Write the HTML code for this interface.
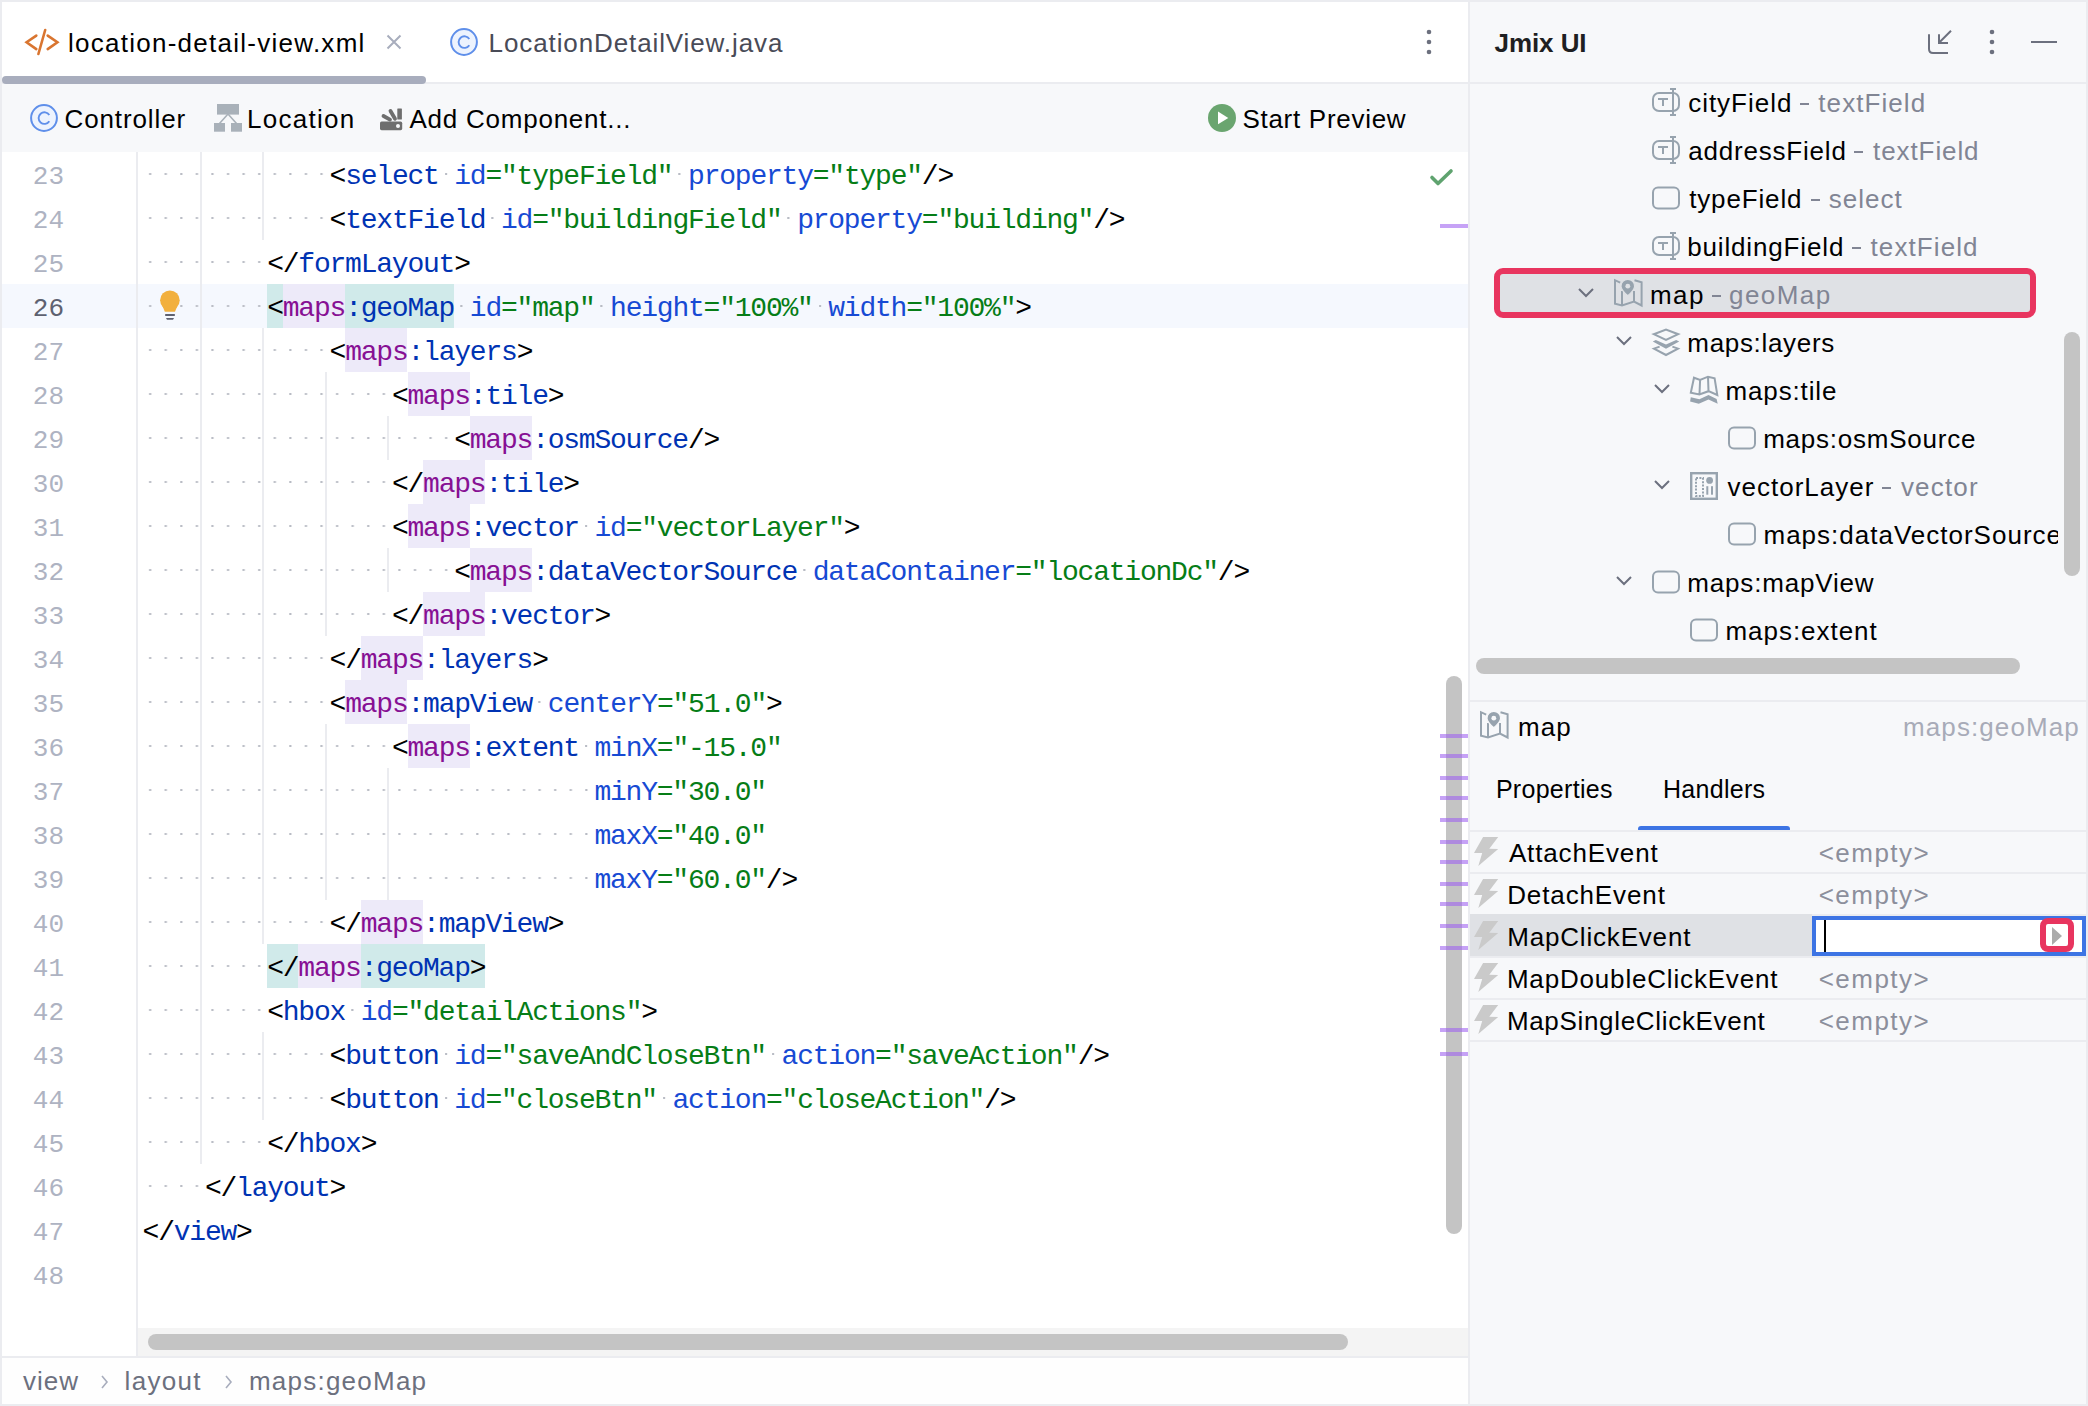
<!DOCTYPE html><html><head><meta charset="utf-8"><style>
*{box-sizing:border-box;margin:0;padding:0}
html,body{width:2088px;height:1406px;overflow:hidden}
body{position:relative;background:#EBECF0;font-family:"Liberation Sans",sans-serif;font-size:26px;color:#000}
.a{position:absolute}
.ui{position:absolute;font-family:"Liberation Sans",sans-serif;font-size:26px;white-space:pre;line-height:30px}
.code{position:absolute;font-family:"Liberation Mono",monospace;font-size:28px;letter-spacing:-1.22px;white-space:pre;line-height:44px;height:44px}
.ln{position:absolute;font-family:"Liberation Mono",monospace;font-size:26px;line-height:44px;color:#AEB3C2;text-align:right;width:80px;left:-16px}
.dots{position:absolute;height:44px;background-image:radial-gradient(circle at 7.2px 22px,#B0B3BC 0,#BFC2CA 0.9px,rgba(255,255,255,0) 1.5px);background-size:15.58px 44px;background-repeat:repeat-x}
.g{position:absolute;width:2px;background:#EBECF0}
.t{color:#0033B3}.p{color:#871094}.at{color:#174AD4}.v{color:#067D17}.k{color:#000}
.gray{color:#818594}
svg{position:absolute;overflow:visible}
</style></head><body>
<div class="a" style="left:2px;top:2px;width:1466px;height:80px;background:#FFFFFF"></div>
<div class="a" style="left:2px;top:82px;width:1466px;height:2px;background:#EBECF0"></div>
<div class="a" style="left:2px;top:76px;width:424px;height:8px;border-radius:4px;background:#A8ADBD"></div>
<div class="a" style="left:2px;top:84px;width:1466px;height:68px;background:#F7F8FA"></div>
<div class="a" style="left:2px;top:152px;width:1466px;height:1204px;background:#FFFFFF"></div>
<div class="a" style="left:2px;top:284px;width:1466px;height:44px;background:#F5F8FE"></div>
<div class="g" style="left:136px;top:152px;height:1204px"></div>
<div class="a" style="left:138px;top:1328px;width:1330px;height:28px;background:#F4F4F4"></div>
<div class="a" style="left:148px;top:1334px;width:1200px;height:16px;border-radius:8px;background:#C4C4C4"></div>
<div class="a" style="left:2px;top:1356px;width:1466px;height:2px;background:#EBECF0"></div>
<div class="a" style="left:2px;top:1358px;width:1466px;height:46px;background:#FEFEFE"></div>
<div class="a" style="left:1446px;top:676px;width:16px;height:558px;border-radius:8px;background:#C4C4C4"></div>
<div class="a" style="left:360.7px;top:944px;width:124.6px;height:44px;background:#D0EAEA"></div><div class="a" style="left:267.2px;top:944px;width:31.2px;height:44px;background:#D0EAEA"></div><div class="a" style="left:345.1px;top:284px;width:109.1px;height:44px;background:#D0EAEA"></div><div class="a" style="left:267.2px;top:284px;width:15.6px;height:44px;background:#D0EAEA"></div><div class="a" style="left:282.8px;top:284px;width:62.3px;height:44px;background:#EDEAF9"></div><div class="a" style="left:345.1px;top:328px;width:62.3px;height:44px;background:#EDEAF9"></div><div class="a" style="left:407.5px;top:372px;width:62.3px;height:44px;background:#EDEAF9"></div><div class="a" style="left:469.8px;top:416px;width:62.3px;height:44px;background:#EDEAF9"></div><div class="a" style="left:423.0px;top:460px;width:62.3px;height:44px;background:#EDEAF9"></div><div class="a" style="left:407.5px;top:504px;width:62.3px;height:44px;background:#EDEAF9"></div><div class="a" style="left:469.8px;top:548px;width:62.3px;height:44px;background:#EDEAF9"></div><div class="a" style="left:423.0px;top:592px;width:62.3px;height:44px;background:#EDEAF9"></div><div class="a" style="left:360.7px;top:636px;width:62.3px;height:44px;background:#EDEAF9"></div><div class="a" style="left:345.1px;top:680px;width:62.3px;height:44px;background:#EDEAF9"></div><div class="a" style="left:407.5px;top:724px;width:62.3px;height:44px;background:#EDEAF9"></div><div class="a" style="left:360.7px;top:900px;width:62.3px;height:44px;background:#EDEAF9"></div><div class="a" style="left:298.4px;top:944px;width:62.3px;height:44px;background:#EDEAF9"></div><div class="g" style="left:200px;top:152px;height:1012px"></div><div class="g" style="left:262px;top:152px;height:88px"></div><div class="g" style="left:262px;top:328px;height:616px"></div><div class="g" style="left:325px;top:372px;height:264px"></div><div class="g" style="left:387px;top:416px;height:44px"></div><div class="g" style="left:387px;top:548px;height:44px"></div><div class="g" style="left:325px;top:724px;height:176px"></div><div class="g" style="left:387px;top:768px;height:132px"></div><div class="g" style="left:262px;top:1032px;height:88px"></div>
<div class="dots" style="left:142.6px;top:152px;width:187.0px"></div><div class="dots" style="left:438.6px;top:152px;width:15.6px"></div><div class="dots" style="left:672.3px;top:152px;width:15.6px"></div><div class="dots" style="left:142.6px;top:196px;width:187.0px"></div><div class="dots" style="left:485.4px;top:196px;width:15.6px"></div><div class="dots" style="left:781.4px;top:196px;width:15.6px"></div><div class="dots" style="left:142.6px;top:240px;width:124.6px"></div><div class="dots" style="left:142.6px;top:284px;width:124.6px"></div><div class="dots" style="left:454.2px;top:284px;width:15.6px"></div><div class="dots" style="left:594.4px;top:284px;width:15.6px"></div><div class="dots" style="left:812.5px;top:284px;width:15.6px"></div><div class="dots" style="left:142.6px;top:328px;width:187.0px"></div><div class="dots" style="left:142.6px;top:372px;width:249.3px"></div><div class="dots" style="left:142.6px;top:416px;width:311.6px"></div><div class="dots" style="left:142.6px;top:460px;width:249.3px"></div><div class="dots" style="left:142.6px;top:504px;width:249.3px"></div><div class="dots" style="left:578.8px;top:504px;width:15.6px"></div><div class="dots" style="left:142.6px;top:548px;width:311.6px"></div><div class="dots" style="left:797.0px;top:548px;width:15.6px"></div><div class="dots" style="left:142.6px;top:592px;width:249.3px"></div><div class="dots" style="left:142.6px;top:636px;width:187.0px"></div><div class="dots" style="left:142.6px;top:680px;width:187.0px"></div><div class="dots" style="left:532.1px;top:680px;width:15.6px"></div><div class="dots" style="left:142.6px;top:724px;width:249.3px"></div><div class="dots" style="left:578.8px;top:724px;width:15.6px"></div><div class="dots" style="left:142.6px;top:768px;width:451.8px"></div><div class="dots" style="left:142.6px;top:812px;width:451.8px"></div><div class="dots" style="left:142.6px;top:856px;width:451.8px"></div><div class="dots" style="left:142.6px;top:900px;width:187.0px"></div><div class="dots" style="left:142.6px;top:944px;width:124.6px"></div><div class="dots" style="left:142.6px;top:988px;width:124.6px"></div><div class="dots" style="left:345.1px;top:988px;width:15.6px"></div><div class="dots" style="left:142.6px;top:1032px;width:187.0px"></div><div class="dots" style="left:438.6px;top:1032px;width:15.6px"></div><div class="dots" style="left:765.8px;top:1032px;width:15.6px"></div><div class="dots" style="left:142.6px;top:1076px;width:187.0px"></div><div class="dots" style="left:438.6px;top:1076px;width:15.6px"></div><div class="dots" style="left:656.7px;top:1076px;width:15.6px"></div><div class="dots" style="left:142.6px;top:1120px;width:124.6px"></div><div class="dots" style="left:142.6px;top:1164px;width:62.3px"></div>
<div class="ln" style="top:155px;color:#AEB3C2">23</div><div class="ln" style="top:199px;color:#AEB3C2">24</div><div class="ln" style="top:243px;color:#AEB3C2">25</div><div class="ln" style="top:287px;color:#5E6170">26</div><div class="ln" style="top:331px;color:#AEB3C2">27</div><div class="ln" style="top:375px;color:#AEB3C2">28</div><div class="ln" style="top:419px;color:#AEB3C2">29</div><div class="ln" style="top:463px;color:#AEB3C2">30</div><div class="ln" style="top:507px;color:#AEB3C2">31</div><div class="ln" style="top:551px;color:#AEB3C2">32</div><div class="ln" style="top:595px;color:#AEB3C2">33</div><div class="ln" style="top:639px;color:#AEB3C2">34</div><div class="ln" style="top:683px;color:#AEB3C2">35</div><div class="ln" style="top:727px;color:#AEB3C2">36</div><div class="ln" style="top:771px;color:#AEB3C2">37</div><div class="ln" style="top:815px;color:#AEB3C2">38</div><div class="ln" style="top:859px;color:#AEB3C2">39</div><div class="ln" style="top:903px;color:#AEB3C2">40</div><div class="ln" style="top:947px;color:#AEB3C2">41</div><div class="ln" style="top:991px;color:#AEB3C2">42</div><div class="ln" style="top:1035px;color:#AEB3C2">43</div><div class="ln" style="top:1079px;color:#AEB3C2">44</div><div class="ln" style="top:1123px;color:#AEB3C2">45</div><div class="ln" style="top:1167px;color:#AEB3C2">46</div><div class="ln" style="top:1211px;color:#AEB3C2">47</div><div class="ln" style="top:1255px;color:#AEB3C2">48</div>
<div class="code" style="left:329.6px;top:154.5px"><span class="k">&lt;</span><span class="t">select</span> <span class="at">id</span><span class="v">=&quot;typeField&quot;</span> <span class="at">property</span><span class="v">=&quot;type&quot;</span><span class="k">/&gt;</span></div><div class="code" style="left:329.6px;top:198.5px"><span class="k">&lt;</span><span class="t">textField</span> <span class="at">id</span><span class="v">=&quot;buildingField&quot;</span> <span class="at">property</span><span class="v">=&quot;building&quot;</span><span class="k">/&gt;</span></div><div class="code" style="left:267.2px;top:242.5px"><span class="k">&lt;/</span><span class="t">formLayout</span><span class="k">&gt;</span></div><div class="code" style="left:267.2px;top:286.5px"><span class="k">&lt;</span><span class="p">maps</span><span class="t">:geoMap</span> <span class="at">id</span><span class="v">=&quot;map&quot;</span> <span class="at">height</span><span class="v">=&quot;100%&quot;</span> <span class="at">width</span><span class="v">=&quot;100%&quot;</span><span class="k">&gt;</span></div><div class="code" style="left:329.6px;top:330.5px"><span class="k">&lt;</span><span class="p">maps</span><span class="t">:layers</span><span class="k">&gt;</span></div><div class="code" style="left:391.9px;top:374.5px"><span class="k">&lt;</span><span class="p">maps</span><span class="t">:tile</span><span class="k">&gt;</span></div><div class="code" style="left:454.2px;top:418.5px"><span class="k">&lt;</span><span class="p">maps</span><span class="t">:osmSource</span><span class="k">/&gt;</span></div><div class="code" style="left:391.9px;top:462.5px"><span class="k">&lt;/</span><span class="p">maps</span><span class="t">:tile</span><span class="k">&gt;</span></div><div class="code" style="left:391.9px;top:506.5px"><span class="k">&lt;</span><span class="p">maps</span><span class="t">:vector</span> <span class="at">id</span><span class="v">=&quot;vectorLayer&quot;</span><span class="k">&gt;</span></div><div class="code" style="left:454.2px;top:550.5px"><span class="k">&lt;</span><span class="p">maps</span><span class="t">:dataVectorSource</span> <span class="at">dataContainer</span><span class="v">=&quot;locationDc&quot;</span><span class="k">/&gt;</span></div><div class="code" style="left:391.9px;top:594.5px"><span class="k">&lt;/</span><span class="p">maps</span><span class="t">:vector</span><span class="k">&gt;</span></div><div class="code" style="left:329.6px;top:638.5px"><span class="k">&lt;/</span><span class="p">maps</span><span class="t">:layers</span><span class="k">&gt;</span></div><div class="code" style="left:329.6px;top:682.5px"><span class="k">&lt;</span><span class="p">maps</span><span class="t">:mapView</span> <span class="at">centerY</span><span class="v">=&quot;51.0&quot;</span><span class="k">&gt;</span></div><div class="code" style="left:391.9px;top:726.5px"><span class="k">&lt;</span><span class="p">maps</span><span class="t">:extent</span> <span class="at">minX</span><span class="v">=&quot;-15.0&quot;</span></div><div class="code" style="left:594.4px;top:770.5px"><span class="at">minY</span><span class="v">=&quot;30.0&quot;</span></div><div class="code" style="left:594.4px;top:814.5px"><span class="at">maxX</span><span class="v">=&quot;40.0&quot;</span></div><div class="code" style="left:594.4px;top:858.5px"><span class="at">maxY</span><span class="v">=&quot;60.0&quot;</span><span class="k">/&gt;</span></div><div class="code" style="left:329.6px;top:902.5px"><span class="k">&lt;/</span><span class="p">maps</span><span class="t">:mapView</span><span class="k">&gt;</span></div><div class="code" style="left:267.2px;top:946.5px"><span class="k">&lt;/</span><span class="p">maps</span><span class="t">:geoMap</span><span class="k">&gt;</span></div><div class="code" style="left:267.2px;top:990.5px"><span class="k">&lt;</span><span class="t">hbox</span> <span class="at">id</span><span class="v">=&quot;detailActions&quot;</span><span class="k">&gt;</span></div><div class="code" style="left:329.6px;top:1034.5px"><span class="k">&lt;</span><span class="t">button</span> <span class="at">id</span><span class="v">=&quot;saveAndCloseBtn&quot;</span> <span class="at">action</span><span class="v">=&quot;saveAction&quot;</span><span class="k">/&gt;</span></div><div class="code" style="left:329.6px;top:1078.5px"><span class="k">&lt;</span><span class="t">button</span> <span class="at">id</span><span class="v">=&quot;closeBtn&quot;</span> <span class="at">action</span><span class="v">=&quot;closeAction&quot;</span><span class="k">/&gt;</span></div><div class="code" style="left:267.2px;top:1122.5px"><span class="k">&lt;/</span><span class="t">hbox</span><span class="k">&gt;</span></div><div class="code" style="left:204.9px;top:1166.5px"><span class="k">&lt;/</span><span class="t">layout</span><span class="k">&gt;</span></div><div class="code" style="left:142.6px;top:1210.5px"><span class="k">&lt;/</span><span class="t">view</span><span class="k">&gt;</span></div>
<svg style="left:158px;top:290px" width="24" height="32" viewBox="0 0 24 32">
<circle cx="11.9" cy="10.3" r="9.8" fill="#F2B03E"/><path d="M4.5 16 L19.3 16 L17 21.8 L6.8 21.8 Z" fill="#F2B03E"/>
<rect x="7" y="24" width="10" height="2" rx="0.8" fill="#5E6170"/><path d="M8 28 L16 28 L15 29.8 L9 29.8 Z" fill="#5E6170"/></svg>
<svg style="left:1428px;top:168px" width="28" height="22" viewBox="0 0 28 22"><path d="M4 9.5 L10 15.5 L23 3" fill="none" stroke="#5FA36F" stroke-width="3.6" stroke-linecap="round" stroke-linejoin="round"/></svg>
<div class="a" style="left:1440px;top:224px;width:28px;height:4px;background:rgba(160,100,240,0.6)"></div>
<div class="a" style="left:1440px;top:734px;width:28px;height:4px;background:rgba(160,100,240,0.6)"></div>
<div class="a" style="left:1440px;top:754px;width:28px;height:4px;background:rgba(160,100,240,0.6)"></div>
<div class="a" style="left:1440px;top:776px;width:28px;height:4px;background:rgba(160,100,240,0.6)"></div>
<div class="a" style="left:1440px;top:796px;width:28px;height:4px;background:rgba(160,100,240,0.6)"></div>
<div class="a" style="left:1440px;top:818px;width:28px;height:4px;background:rgba(160,100,240,0.6)"></div>
<div class="a" style="left:1440px;top:840px;width:28px;height:4px;background:rgba(160,100,240,0.6)"></div>
<div class="a" style="left:1440px;top:860px;width:28px;height:4px;background:rgba(160,100,240,0.6)"></div>
<div class="a" style="left:1440px;top:882px;width:28px;height:4px;background:rgba(160,100,240,0.6)"></div>
<div class="a" style="left:1440px;top:902px;width:28px;height:4px;background:rgba(160,100,240,0.6)"></div>
<div class="a" style="left:1440px;top:924px;width:28px;height:4px;background:rgba(160,100,240,0.6)"></div>
<div class="a" style="left:1440px;top:946px;width:28px;height:4px;background:rgba(160,100,240,0.6)"></div>
<div class="a" style="left:1440px;top:1028px;width:28px;height:4px;background:rgba(160,100,240,0.6)"></div>
<div class="a" style="left:1440px;top:1052px;width:28px;height:4px;background:rgba(160,100,240,0.6)"></div>
<div class="a" style="left:1468px;top:0px;width:2px;height:1406px;background:#EBECF0"></div>
<svg style="left:24px;top:27px" width="36" height="30" viewBox="0 0 36 30">
<path d="M12.3 8.6 L2.6 15.3 L12.3 22.1 M23.7 8.6 L33.4 15.3 L23.7 22.1" fill="none" stroke="#D97530" stroke-width="2.6" stroke-linecap="round" stroke-linejoin="miter"/>
<path d="M21.2 3 L14.4 27" fill="none" stroke="#D97530" stroke-width="2.6" stroke-linecap="round"/></svg>
<svg style="left:386px;top:34px" width="16" height="16" viewBox="0 0 16 16"><path d="M1.5 1.5 L14.5 14.5 M14.5 1.5 L1.5 14.5" stroke="#A8ADBD" stroke-width="2"/></svg>
<svg style="left:450px;top:28px" width="28" height="28" viewBox="0 0 28 28"><circle cx="14" cy="14" r="12.9" fill="#EDF3FE" stroke="#5F8FEA" stroke-width="2"/><path d="M19.3 11 A5.8 5.8 0 1 0 19.3 17.2" fill="none" stroke="#5F8FEA" stroke-width="1.9"/></svg>
<svg style="left:1424px;top:28px" width="10" height="30" viewBox="0 0 10 30"><circle cx="5" cy="4" r="2.3" fill="#6C707E"/><circle cx="5" cy="14" r="2.3" fill="#6C707E"/><circle cx="5" cy="24" r="2.3" fill="#6C707E"/></svg>
<svg style="left:30px;top:104px" width="28" height="28" viewBox="0 0 28 28"><circle cx="14" cy="14" r="12.9" fill="#EDF3FE" stroke="#5F8FEA" stroke-width="2"/><path d="M19.3 11 A5.8 5.8 0 1 0 19.3 17.2" fill="none" stroke="#5F8FEA" stroke-width="1.9"/></svg>
<svg style="left:214px;top:104px" width="28" height="28" viewBox="0 0 28 28">
<rect x="3" y="0" width="22" height="10.6" fill="#A9B1B9"/><rect x="0" y="19" width="11" height="8.7" fill="#A9B1B9"/><rect x="17" y="19" width="11" height="8.7" fill="#A9B1B9"/>
<path d="M14 10 L5.5 19.5 M14 10 L22.5 19.5" stroke="#A9B1B9" stroke-width="1.6"/></svg>
<svg style="left:380px;top:108px" width="23" height="23" viewBox="0 0 23 23">
<rect x="0" y="13.6" width="22.2" height="8.6" rx="1.6" fill="#6E6E6E"/><circle cx="18" cy="18" r="2" fill="#F7F8FA"/>
<path d="M3.5 8 L10 11.6" stroke="#6E6E6E" stroke-width="3.8" stroke-linecap="round"/>
<path d="M10.5 3 L15 10.8" stroke="#6E6E6E" stroke-width="3.8" stroke-linecap="round"/>
<rect x="17.3" y="0.4" width="4.6" height="11" rx="0.5" fill="#6E6E6E"/></svg>
<svg style="left:1208px;top:104px" width="28" height="28" viewBox="0 0 28 28"><circle cx="14" cy="14" r="14" fill="#6AA56F"/><path d="M10 7.6 L20.3 14 L10 20.3 Z" fill="#FFFFFF"/></svg>
<svg style="left:100px;top:1374px" width="10" height="16" viewBox="0 0 10 16"><path d="M2 2 L7 8 L2 14" fill="none" stroke="#A8ADBD" stroke-width="1.6"/></svg>
<svg style="left:224px;top:1374px" width="10" height="16" viewBox="0 0 10 16"><path d="M2 2 L7 8 L2 14" fill="none" stroke="#A8ADBD" stroke-width="1.6"/></svg>
<div class="a" style="left:1470px;top:2px;width:616px;height:1402px;background:#F7F8FA"></div>
<div class="a" style="left:1470px;top:82px;width:616px;height:2px;background:#EBECF0"></div>
<svg style="left:1926px;top:28px" width="28" height="28" viewBox="0 0 28 28"><path d="M3 6.2 L3 21 Q3 25 7 25 L22 25" fill="none" stroke="#6C707E" stroke-width="2"/><path d="M25 2.7 L13.5 14.2 M13 6.2 L13 15 L22 15" fill="none" stroke="#6C707E" stroke-width="2"/></svg>
<svg style="left:1987px;top:28px" width="10" height="30" viewBox="0 0 10 30"><circle cx="5" cy="4" r="2.3" fill="#6C707E"/><circle cx="5" cy="14" r="2.3" fill="#6C707E"/><circle cx="5" cy="24" r="2.3" fill="#6C707E"/></svg>
<div class="a" style="left:2031px;top:41px;width:26px;height:2px;background:#6C707E"></div>
<div class="a" style="left:1494px;top:268px;width:542px;height:50px;border:6px solid #E8355F;border-radius:9px;background:#DFE1E5"></div>
<div class="a" style="left:1470px;top:84px;width:594px;height:568px;overflow:hidden">
<svg style="left:182px;top:4px" width="28" height="28" viewBox="0 0 28 28"><rect x="1" y="5" width="26" height="18" rx="6" fill="none" stroke="#97A3AE" stroke-width="2"/><path d="M21 1 L21 27 M18 1 L24 1 M18 27 L24 27 M6 10.9 L16 10.9 M11 11 L11 18" stroke="#97A3AE" stroke-width="2" fill="none"/></svg>
<svg style="left:182px;top:52px" width="28" height="28" viewBox="0 0 28 28"><rect x="1" y="5" width="26" height="18" rx="6" fill="none" stroke="#97A3AE" stroke-width="2"/><path d="M21 1 L21 27 M18 1 L24 1 M18 27 L24 27 M6 10.9 L16 10.9 M11 11 L11 18" stroke="#97A3AE" stroke-width="2" fill="none"/></svg>
<svg style="left:182px;top:100px" width="28" height="28" viewBox="0 0 28 28"><rect x="1" y="3.5" width="26" height="21" rx="5" fill="none" stroke="#97A3AE" stroke-width="2"/></svg>
<svg style="left:182px;top:148px" width="28" height="28" viewBox="0 0 28 28"><rect x="1" y="5" width="26" height="18" rx="6" fill="none" stroke="#97A3AE" stroke-width="2"/><path d="M21 1 L21 27 M18 1 L24 1 M18 27 L24 27 M6 10.9 L16 10.9 M11 11 L11 18" stroke="#97A3AE" stroke-width="2" fill="none"/></svg>
<svg style="left:108px;top:202px" width="16" height="12" viewBox="0 0 16 12"><path d="M1 3 L8 10 L15 3" fill="none" stroke="#6C707E" stroke-width="2"/></svg>
<svg style="left:144px;top:194px" width="30" height="30" viewBox="0 0 30 30"><path d="M6.2 4.6 L1 2.2 L1 25.6 L8 27.4 L20 23.6 L27.6 27.5 L27.6 4.3 L20.5 2.3" fill="none" stroke="#97A3AE" stroke-width="2" stroke-linejoin="miter"/><path d="M8 13 L8 27 M20 13 L20 23.6" fill="none" stroke="#97A3AE" stroke-width="2"/><path d="M13.8 1.4 C9.8 1.4 7 4.4 7 8.2 C7 11 9.5 14 13.8 17.8 C18.1 14 20.6 11 20.6 8.2 C20.6 4.4 17.8 1.4 13.8 1.4 Z" fill="#97A3AE" stroke="#DFE1E5" stroke-width="1.2"/><circle cx="13.8" cy="8.2" r="2.4" fill="#DFE1E5"/></svg>
<svg style="left:146px;top:250px" width="16" height="12" viewBox="0 0 16 12"><path d="M1 3 L8 10 L15 3" fill="none" stroke="#6C707E" stroke-width="2"/></svg>
<svg style="left:182px;top:244px" width="28" height="28" viewBox="0 0 28 28"><path d="M1.8 6.2 L14 1.6 L26.2 6.2 L14 11.8 Z" fill="none" stroke="#97A3AE" stroke-width="2" stroke-linejoin="miter"/><path d="M0.8 13.4 L3.8 12 L14 16.6 L24.2 12 L27.2 13.4 L14 20.8 Z" fill="#97A3AE"/><path d="M7.6 18.6 L2 20.6 L14 27 L26 20.6 L20.4 18.6" fill="none" stroke="#97A3AE" stroke-width="2" stroke-linejoin="miter"/></svg>
<svg style="left:184px;top:298px" width="16" height="12" viewBox="0 0 16 12"><path d="M1 3 L8 10 L15 3" fill="none" stroke="#6C707E" stroke-width="2"/></svg>
<svg style="left:220px;top:292px" width="30" height="30" viewBox="0 0 30 30"><path d="M4 1.7 L10.1 4 L18 0.7 L24.6 2.4 L27.3 19 L18.5 15.2 L9.4 18.5 L0.8 16.8 Z M10.1 4 L9.5 18.3 M18 0.7 L18.5 15.2" fill="none" stroke="#97A3AE" stroke-width="2" stroke-linejoin="miter"/><path d="M0.8 21.3 L9.4 23.3 L18.5 19 L26.6 23 L27.7 27.7 L18.5 23.6 L8.8 27.7 L0.1 25.6 Z" fill="#97A3AE"/></svg>
<svg style="left:258px;top:340px" width="28" height="28" viewBox="0 0 28 28"><rect x="1" y="3.5" width="26" height="21" rx="5" fill="none" stroke="#97A3AE" stroke-width="2"/></svg>
<svg style="left:184px;top:394px" width="16" height="12" viewBox="0 0 16 12"><path d="M1 3 L8 10 L15 3" fill="none" stroke="#6C707E" stroke-width="2"/></svg>
<svg style="left:220px;top:388px" width="28" height="28" viewBox="0 0 28 28"><rect x="1.2" y="1.2" width="25.6" height="25.6" fill="none" stroke="#97A3AE" stroke-width="2.4"/><rect x="6" y="6" width="7" height="18" fill="none" stroke="#97A3AE" stroke-width="2" stroke-dasharray="2 1.4"/><circle cx="19.6" cy="8.4" r="3.4" fill="#97A3AE"/><rect x="16.3" y="14.2" width="2" height="8.5" fill="#97A3AE"/><rect x="21" y="14.2" width="2" height="8.5" fill="#97A3AE"/></svg>
<svg style="left:258px;top:436px" width="28" height="28" viewBox="0 0 28 28"><rect x="1" y="3.5" width="26" height="21" rx="5" fill="none" stroke="#97A3AE" stroke-width="2"/></svg>
<svg style="left:146px;top:490px" width="16" height="12" viewBox="0 0 16 12"><path d="M1 3 L8 10 L15 3" fill="none" stroke="#6C707E" stroke-width="2"/></svg>
<svg style="left:182px;top:484px" width="28" height="28" viewBox="0 0 28 28"><rect x="1" y="3.5" width="26" height="21" rx="5" fill="none" stroke="#97A3AE" stroke-width="2"/></svg>
<svg style="left:220px;top:532px" width="28" height="28" viewBox="0 0 28 28"><rect x="1" y="3.5" width="26" height="21" rx="5" fill="none" stroke="#97A3AE" stroke-width="2"/></svg>
</div>
<div class="a" style="left:2064px;top:332px;width:16px;height:244px;border-radius:8px;background:#C4C4C4"></div>
<div class="a" style="left:1476px;top:658px;width:544px;height:16px;border-radius:8px;background:#C4C4C4"></div>
<div class="a" style="left:1470px;top:700px;width:616px;height:2px;background:#EBECF0"></div>
<svg style="left:1480px;top:710px" width="30" height="30" viewBox="0 0 30 30"><path d="M6.2 4.6 L1 2.2 L1 25.6 L8 27.4 L20 23.6 L27.6 27.5 L27.6 4.3 L20.5 2.3" fill="none" stroke="#97A3AE" stroke-width="2" stroke-linejoin="miter"/><path d="M8 13 L8 27 M20 13 L20 23.6" fill="none" stroke="#97A3AE" stroke-width="2"/><path d="M13.8 1.4 C9.8 1.4 7 4.4 7 8.2 C7 11 9.5 14 13.8 17.8 C18.1 14 20.6 11 20.6 8.2 C20.6 4.4 17.8 1.4 13.8 1.4 Z" fill="#97A3AE" stroke="#F7F8FA" stroke-width="1.2"/><circle cx="13.8" cy="8.2" r="2.4" fill="#F7F8FA"/></svg>
<div class="a" style="left:1638px;top:826px;width:152px;height:6px;border-radius:3px;background:#3D74E4"></div>
<div class="a" style="left:1470px;top:830px;width:616px;height:2px;background:#EBECF0"></div>
<div class="a" style="left:1470px;top:872px;width:616px;height:2px;background:#EBECF0"></div>
<svg style="left:1473px;top:836px" width="26" height="30" viewBox="0 0 26 30"><path d="M10.1 1.1 L25.2 1.1 L16.3 12.8 L25.2 13.1 L5.3 29.9 L9.2 17.1 L1 17.1 Z" fill="#CACACA"/></svg>
<div class="a" style="left:1470px;top:914px;width:616px;height:2px;background:#EBECF0"></div>
<svg style="left:1473px;top:878px" width="26" height="30" viewBox="0 0 26 30"><path d="M10.1 1.1 L25.2 1.1 L16.3 12.8 L25.2 13.1 L5.3 29.9 L9.2 17.1 L1 17.1 Z" fill="#CACACA"/></svg>
<div class="a" style="left:1470px;top:914px;width:342px;height:44px;background:#DFE1E5"></div>
<div class="a" style="left:1470px;top:956px;width:616px;height:2px;background:#EBECF0"></div>
<svg style="left:1473px;top:920px" width="26" height="30" viewBox="0 0 26 30"><path d="M10.1 1.1 L25.2 1.1 L16.3 12.8 L25.2 13.1 L5.3 29.9 L9.2 17.1 L1 17.1 Z" fill="#CACACA"/></svg>
<div class="a" style="left:1470px;top:998px;width:616px;height:2px;background:#EBECF0"></div>
<svg style="left:1473px;top:962px" width="26" height="30" viewBox="0 0 26 30"><path d="M10.1 1.1 L25.2 1.1 L16.3 12.8 L25.2 13.1 L5.3 29.9 L9.2 17.1 L1 17.1 Z" fill="#CACACA"/></svg>
<div class="a" style="left:1470px;top:1040px;width:616px;height:2px;background:#EBECF0"></div>
<svg style="left:1473px;top:1004px" width="26" height="30" viewBox="0 0 26 30"><path d="M10.1 1.1 L25.2 1.1 L16.3 12.8 L25.2 13.1 L5.3 29.9 L9.2 17.1 L1 17.1 Z" fill="#CACACA"/></svg>
<div class="a" style="left:1812px;top:916px;width:274px;height:40px;border:4px solid #3D74E4;background:#FFFFFF"></div>
<div class="a" style="left:1824px;top:920px;width:2px;height:32px;background:#000"></div>
<div class="a" style="left:2040px;top:918px;width:34px;height:34px;border:6px solid #E8355F;border-radius:8px;background:#FFFFFF"></div>
<svg style="left:2051px;top:927px" width="12" height="18" viewBox="0 0 12 18"><path d="M1 0 L11 9 L1 18 Z" fill="#ABABAB"/></svg>
<div class="ui" id="tab1" style="left:68.00px;top:28.00px;font-size:26px;color:#000000;letter-spacing:1.261px">location-detail-view.xml</div>
<div class="ui" id="tab2" style="left:488.60px;top:28.00px;font-size:26px;color:#494B57;letter-spacing:0.891px">LocationDetailView.java</div>
<div class="ui" id="ctrl" style="left:64.50px;top:104.00px;font-size:26px;color:#000000;letter-spacing:0.889px">Controller</div>
<div class="ui" id="loc" style="left:247.10px;top:104.00px;font-size:26px;color:#000000;letter-spacing:1.257px">Location</div>
<div class="ui" id="addc" style="left:409.50px;top:104.00px;font-size:26px;color:#000000;letter-spacing:0.760px">Add Component...</div>
<div class="ui" id="start" style="left:1242.40px;top:104.00px;font-size:26px;color:#000000;letter-spacing:0.717px">Start Preview</div>
<div class="ui" id="jmix" style="left:1494.50px;top:28.00px;font-size:26px;color:#1E1F22;letter-spacing:-0.067px;font-weight:700">Jmix UI</div>
<div class="ui" id="bc1" style="left:22.90px;top:1366.00px;font-size:26px;color:#6C707E;letter-spacing:1.067px">view</div>
<div class="ui" id="bc2" style="left:124.60px;top:1366.00px;font-size:26px;color:#6C707E;letter-spacing:1.320px">layout</div>
<div class="ui" id="bc3" style="left:248.90px;top:1366.00px;font-size:26px;color:#6C707E;letter-spacing:1.240px">maps:geoMap</div>
<div class="ui" id="t1" style="left:1688.20px;top:88.00px;font-size:26px;color:#000000;letter-spacing:0.975px">cityField</div>
<div class="ui" id="t1b" style="left:1818.30px;top:88.00px;font-size:26px;color:#818594;letter-spacing:1.075px">textField</div>
<div class="ui" id="t2" style="left:1688.20px;top:136.00px;font-size:26px;color:#000000;letter-spacing:0.800px">addressField</div>
<div class="ui" id="t2b" style="left:1873.10px;top:136.00px;font-size:26px;color:#818594;letter-spacing:0.900px">textField</div>
<div class="ui" id="t3" style="left:1689.20px;top:184.00px;font-size:26px;color:#000000;letter-spacing:0.850px">typeField</div>
<div class="ui" id="t3b" style="left:1828.70px;top:184.00px;font-size:26px;color:#818594;letter-spacing:1.040px">select</div>
<div class="ui" id="t4" style="left:1687.20px;top:232.00px;font-size:26px;color:#000000;letter-spacing:0.850px">buildingField</div>
<div class="ui" id="t4b" style="left:1870.50px;top:232.00px;font-size:26px;color:#818594;letter-spacing:1.100px">textField</div>
<div class="ui" id="t5" style="left:1649.90px;top:280.00px;font-size:26px;color:#000000;letter-spacing:1.500px">map</div>
<div class="ui" id="t5b" style="left:1729.00px;top:280.00px;font-size:26px;color:#818594;letter-spacing:1.440px">geoMap</div>
<div class="ui" id="t6" style="left:1687.30px;top:328.00px;font-size:26px;color:#000000;letter-spacing:0.680px">maps:layers</div>
<div class="ui" id="t7" style="left:1725.50px;top:376.00px;font-size:26px;color:#000000;letter-spacing:0.850px">maps:tile</div>
<div class="ui" id="t8" style="left:1763.20px;top:424.00px;font-size:26px;color:#000000;letter-spacing:0.769px">maps:osmSource</div>
<div class="ui" id="t9" style="left:1727.50px;top:472.00px;font-size:26px;color:#000000;letter-spacing:1.000px">vectorLayer</div>
<div class="ui" id="t9b" style="left:1900.90px;top:472.00px;font-size:26px;color:#818594;letter-spacing:1.200px">vector</div>
<div class="a" style="left:1470px;top:500px;width:588px;height:80px;overflow:hidden"><div class="ui" style="left:1763.50px;top:520.00px;font-size:26px;color:#000000;letter-spacing:1.000px;left:293.50px;top:20.00px">maps:dataVectorSource</div></div>
<div class="ui" id="t11" style="left:1687.30px;top:568.00px;font-size:26px;color:#000000;letter-spacing:0.818px">maps:mapView</div>
<div class="ui" id="t12" style="left:1725.50px;top:616.00px;font-size:26px;color:#000000;letter-spacing:0.960px">maps:extent</div>
<div class="ui" id="hmap" style="left:1518.00px;top:712.00px;font-size:26px;color:#000000;letter-spacing:1.100px">map</div>
<div class="ui" id="hgeo" style="left:1903.00px;top:712.00px;font-size:26px;color:#A8ABB8;letter-spacing:1.100px">maps:geoMap</div>
<div class="ui" id="props" style="left:1495.90px;top:774.30px;font-size:25px;color:#000000;letter-spacing:0.289px">Properties</div>
<div class="ui" id="hand" style="left:1663.00px;top:774.30px;font-size:25px;color:#000000;letter-spacing:0.286px">Handlers</div>
<div class="ui" id="e1" style="left:1508.90px;top:838.00px;font-size:26px;color:#000000;letter-spacing:0.860px">AttachEvent</div>
<div class="ui" id="e2" style="left:1507.20px;top:880.00px;font-size:26px;color:#000000;letter-spacing:0.880px">DetachEvent</div>
<div class="ui" id="e3" style="left:1507.20px;top:922.00px;font-size:26px;color:#000000;letter-spacing:0.817px">MapClickEvent</div>
<div class="ui" id="e4" style="left:1506.90px;top:964.00px;font-size:26px;color:#000000;letter-spacing:0.822px">MapDoubleClickEvent</div>
<div class="ui" id="e5" style="left:1506.90px;top:1006.00px;font-size:26px;color:#000000;letter-spacing:0.678px">MapSingleClickEvent</div>
<div class="ui" id="x1" style="left:1818.70px;top:838.00px;font-size:26px;color:#8C8F9C;letter-spacing:1.467px">&lt;empty&gt;</div>
<div class="ui" id="x2" style="left:1818.70px;top:880.00px;font-size:26px;color:#8C8F9C;letter-spacing:1.467px">&lt;empty&gt;</div>
<div class="ui" id="x4" style="left:1818.70px;top:964.00px;font-size:26px;color:#8C8F9C;letter-spacing:1.467px">&lt;empty&gt;</div>
<div class="ui" id="x5" style="left:1818.70px;top:1006.00px;font-size:26px;color:#8C8F9C;letter-spacing:1.467px">&lt;empty&gt;</div>
<div class="a" style="left:1800.0px;top:103px;width:9px;height:2.4px;background:#818594"></div>
<div class="a" style="left:1854.0px;top:151px;width:9px;height:2.4px;background:#818594"></div>
<div class="a" style="left:1810.5px;top:199px;width:9px;height:2.4px;background:#818594"></div>
<div class="a" style="left:1852.4px;top:247px;width:9px;height:2.4px;background:#818594"></div>
<div class="a" style="left:1711.6px;top:295px;width:9px;height:2.4px;background:#818594"></div>
<div class="a" style="left:1882.0px;top:487px;width:9px;height:2.4px;background:#818594"></div>
<div class="a" style="left:0;top:0;width:2088px;height:2px;background:#EBECF0"></div>
<div class="a" style="left:0;top:1404px;width:2088px;height:2px;background:#EBECF0"></div>
<div class="a" style="left:0;top:0;width:2px;height:1406px;background:#EBECF0"></div>
<div class="a" style="left:2086px;top:0;width:2px;height:1406px;background:#EBECF0"></div>
</body></html>
